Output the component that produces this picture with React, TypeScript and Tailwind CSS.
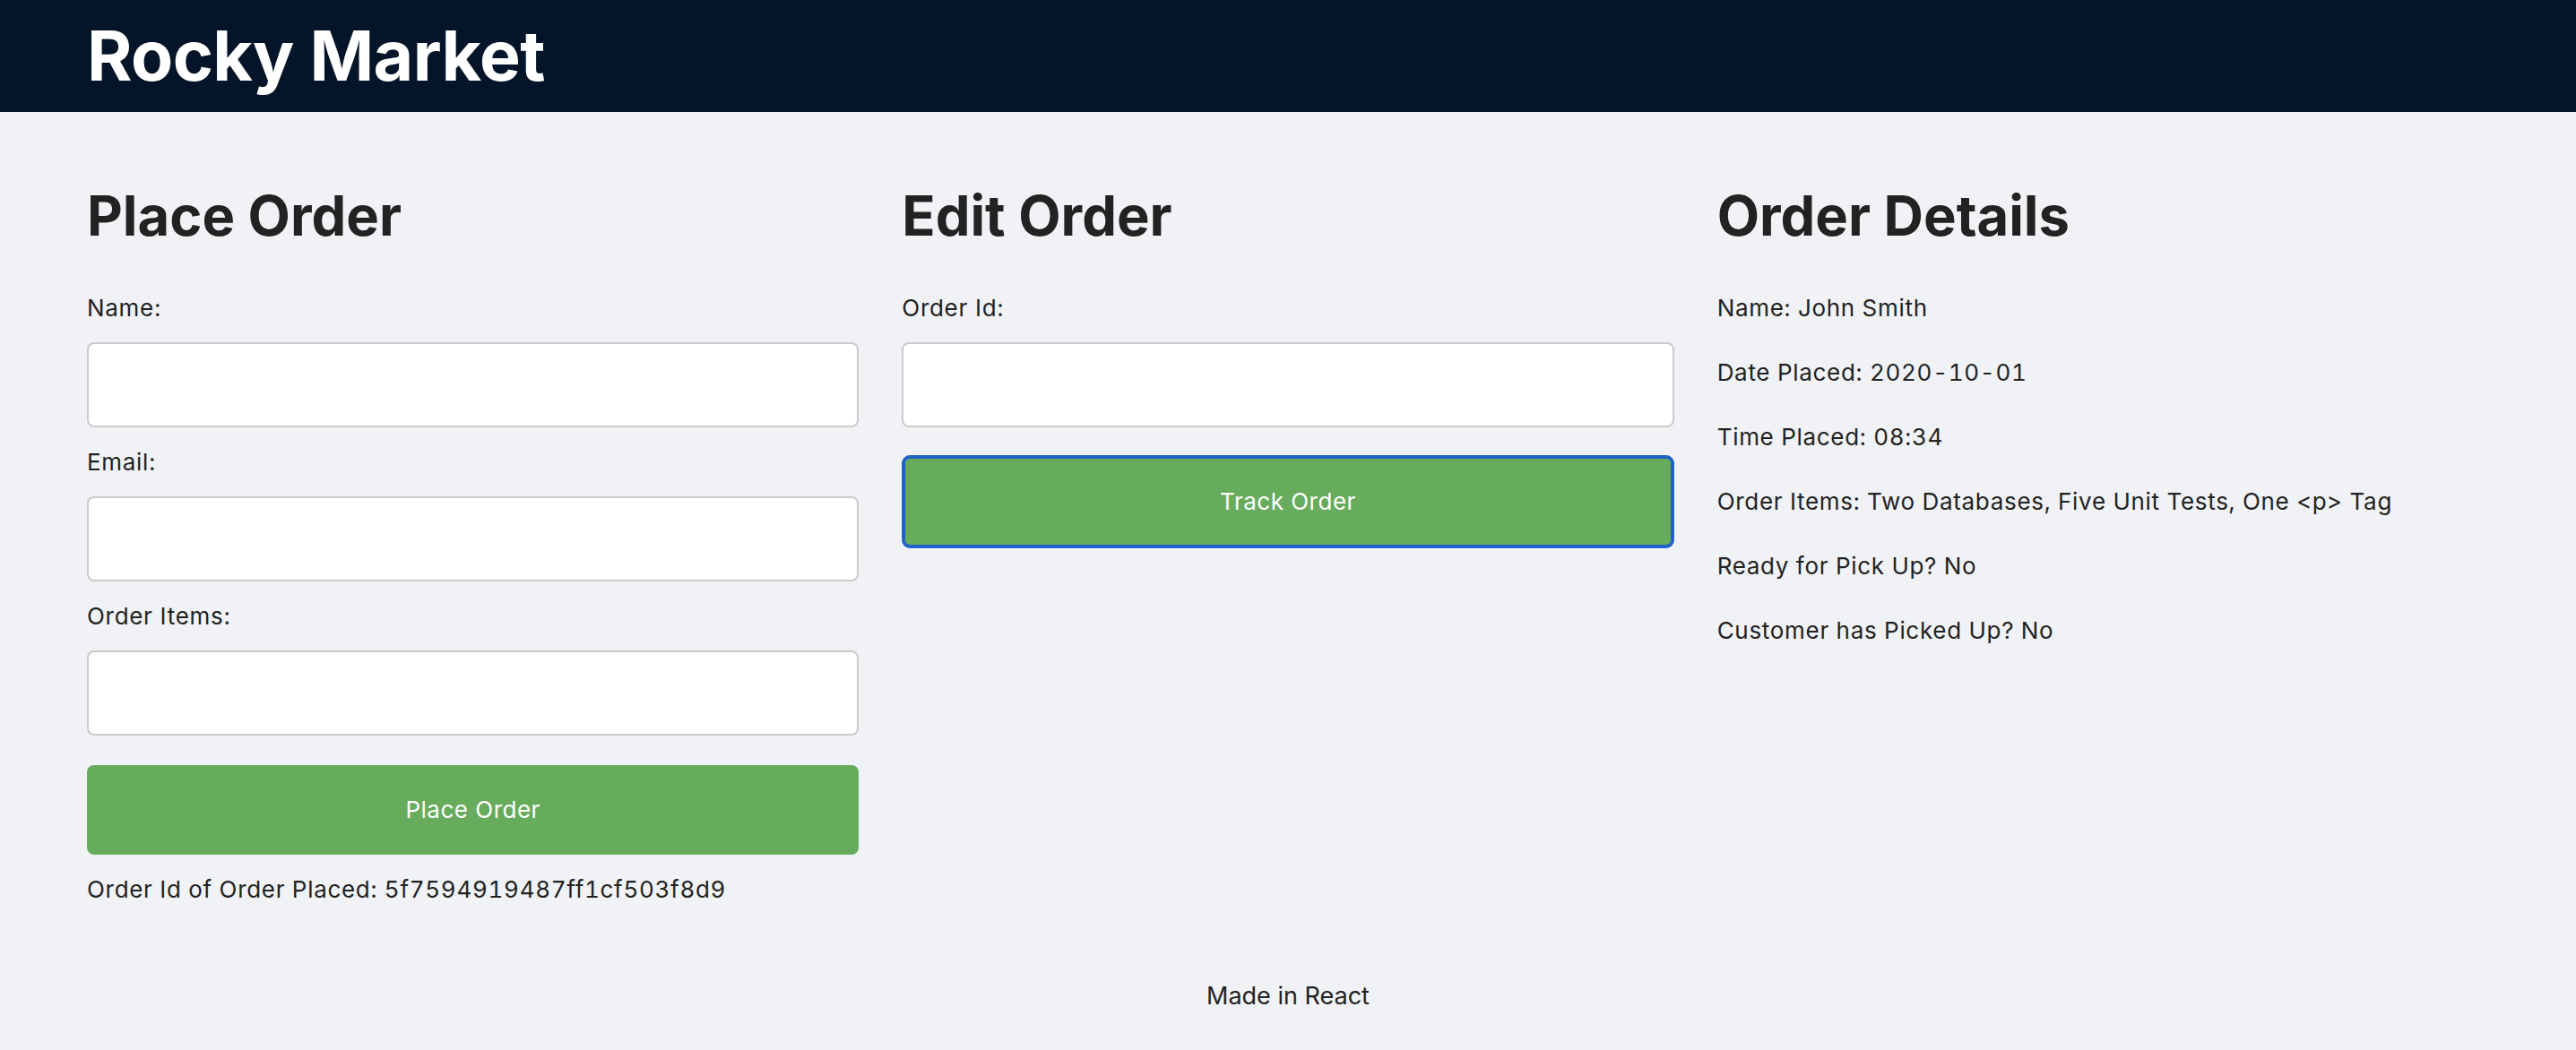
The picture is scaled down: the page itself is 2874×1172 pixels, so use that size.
import React from 'react'

// Shared field used by both order forms
function Field({ label }: { label: string }) {
  return (
    <div className="flex flex-col">
      <label className="text-[26px] leading-[39px] tracking-[0.7px]">{label}</label>
      <input
        type="text"
        className="mt-[19px] mb-[19px] h-[95px] w-full rounded-[8px] border-2 border-[#cbcbcb] bg-white px-4 text-[26px] outline-none"
      />
    </div>
  )
}

const details = [
  'Name: John Smith',
  'Date Placed: 2020-10-01',
  'Time Placed: 08:34',
  'Order Items: Two Databases, Five Unit Tests, One <p> Tag',
  'Ready for Pick Up? No',
  'Customer has Picked Up? No',
]

export default function App() {
  return (
    <div
      className="min-h-[1172px] bg-[#f0f2f5] text-[#222222]"
      style={{ fontFamily: 'Inter, "Noto Sans", sans-serif' }}
    >
      <header className="flex h-[125px] items-center bg-[#041529] px-[97px]">
        <h1 className="text-[77px] font-bold leading-none tracking-[-0.6px] text-white">Rocky Market</h1>
      </header>

      <main className="grid grid-cols-3 gap-x-[48px] px-[97px] pt-[79px]">
        {/* Place Order */}
        <section className="flex flex-col">
          <h2 className="mb-[46px] text-[61.5px] font-bold leading-[1.2]">Place Order</h2>
          <Field label="Name:" />
          <Field label="Email:" />
          <Field label="Order Items:" />
          <button className="mt-[14px] h-[100px] w-full rounded-[8px] bg-[#67ac5c] text-[26px] tracking-[0.5px] text-white">
            Place Order
          </button>
          <p className="mt-[19px] text-[26px] leading-[39px] tracking-[0.7px] tabular-nums">
            Order Id of Order Placed: 5f7594919487ff1cf503f8d9
          </p>
        </section>

        {/* Edit Order */}
        <section className="flex flex-col">
          <h2 className="mb-[46px] text-[61.5px] font-bold leading-[1.2]">Edit Order</h2>
          <Field label="Order Id:" />
          <button className="mt-[12px] h-[104px] w-full rounded-[9px] border-4 border-[#2062c9] bg-[#67ac5c] text-[26px] tracking-[0.5px] text-white ring-1 ring-white">
            Track Order
          </button>
        </section>

        {/* Order Details */}
        <section className="flex flex-col">
          <h2 className="mb-[46px] text-[61.5px] font-bold leading-[1.2]">Order Details</h2>
          <div className="flex flex-col gap-[33px]">
            {details.map((d) => (
              <p key={d} className="text-[26px] leading-[39px] tracking-[0.7px] tabular-nums">
                {d}
              </p>
            ))}
          </div>
        </section>
      </main>

      <footer className="pt-[80px] text-center text-[27px] leading-[40px]">Made in React</footer>
    </div>
  )
}
